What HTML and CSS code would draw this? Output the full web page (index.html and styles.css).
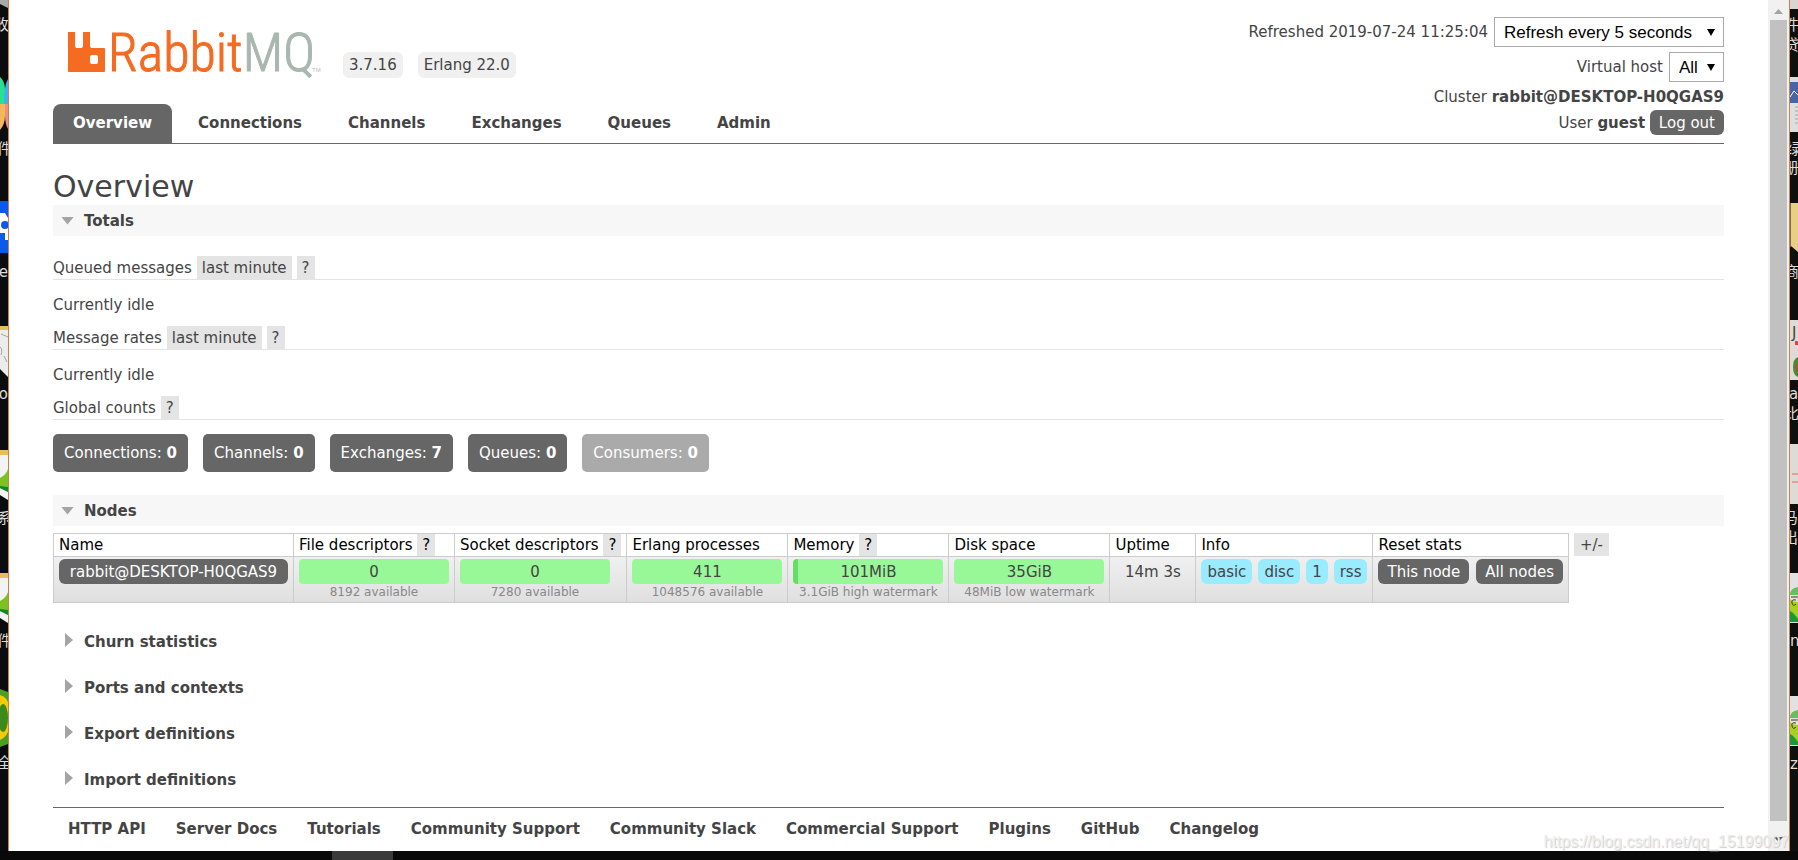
FILE: index.html
```html
<!DOCTYPE html>
<html lang="en">
<head>
<meta charset="utf-8">
<title>RabbitMQ Management</title>
<link rel="stylesheet" href="styles.css">
</head>
<body>
<div class="desktop">
  <svg class="strip" width="8" viewBox="0 0 8 851" preserveAspectRatio="xMinYMin slice" aria-hidden="true">
    <rect width="8" height="851" fill="#0b0c0d"/>
    <path d="M0 0h8v8L0 4z" fill="#a9a9a9"/>
    <path d="M0 77q5 4 5 13v14H0z" fill="#2be08c"/><path d="M8 79q-4 6-4 25h4z" fill="#3fb0ee"/>
    <path d="M0 104h5v12q0 8-5 14z" fill="#f5b75c"/><path d="M5 104h3v25q-3-5-3-14z" fill="#ee8f86"/>
    <rect y="201" width="8" height="52" fill="#0b5be8"/><path d="M0 213h5l3 5v22H5v-7H0z" fill="#fff"/><circle cx="5" cy="225" r="4" fill="#0b5be8"/>
    <path d="M0 326h8v51L0 369z" fill="#ececec"/><path d="M0 326h8v4H0z" fill="#e3c25e"/><path d="M1 334l7 3M0 347q3 2 1 8M4 356l3 6" stroke="#9aa6ad" fill="none"/>
    <path d="M0 450h8v50L0 495z" fill="#f3f3f3"/><path d="M0 450h8v5H0z" fill="#e8bd62"/><path d="M0 478q6-3 8-9v23L0 488z" fill="#7cc322"/><path d="M0 486l8 1v5l-8-4z" fill="#0c8a31"/>
    <path d="M0 573h8v50L0 618z" fill="#f3f3f3"/><path d="M0 573h8v5H0z" fill="#e8bd62"/><path d="M0 601q6-3 8-9v23L0 611z" fill="#7cc322"/><path d="M0 609l8 1v5l-8-4z" fill="#0c8a31"/>
    <path d="M0 689l8 3v52l-8 3z" fill="#4a9f25"/><path d="M0 695q6 2 8 7v30q-3 6-8 8z" fill="#f4cb07"/><ellipse cx="3" cy="718" rx="5" ry="14" fill="#3d8a1c"/>
    <g class="strip-text" text-anchor="end"><text x="9" y="30">收</text><text x="12" y="154">文件</text><text x="8" y="277">ce</text><text x="8" y="399">o</text><text x="12" y="523">联系</text><text x="12" y="646">文件</text><text x="12" y="768">安全</text></g>
  </svg>

  <div class="window">
    <div class="page">
      <header class="header">
        <div class="brand">
          <svg class="logo" width="260" height="56" viewBox="0 0 260 56" role="img" aria-label="RabbitMQ">
            <path d="M0 8.500Q0 8 .5 8H6.500Q7 8 7 8.500V22Q7 24 9 24H13Q15 24 15 22V8.500Q15 8 15.500 8H21.500Q22 8 22 8.500V22Q22 24 24 24H36Q37 24 37 25V47Q37 48 36 48H1Q0 48 0 47ZM24 31Q22 31 22 33V38Q22 40 24 40H28Q30 40 30 38V33Q30 31 28 31Z" fill="#f56b22" fill-rule="evenodd"/>
            <text class="word" x="40" y="47"><tspan class="word-rabbit">Rabbit</tspan><tspan class="word-mq">MQ</tspan></text>
            <text class="tm" x="244" y="48">TM</text>
          </svg>
          <div class="versions"><span>3.7.16</span><span>Erlang 22.0</span></div>
        </div>
        <div class="status">
          <div class="status-row"><label for="refresh">Refreshed 2019-07-24 11:25:04</label><span class="pick"><select id="refresh"><option>Refresh every 5 seconds</option></select></span></div>
          <div class="status-row"><label for="vhost">Virtual host</label><span class="pick pick-small"><select id="vhost"><option>All</option></select></span></div>
          <div class="status-line">Cluster <b>rabbit@DESKTOP-H0QGAS9</b></div>
          <div class="status-line">User <b>guest</b> <button class="btn" type="button">Log out</button></div>
        </div>
        <nav class="tabs">
          <a class="current" href="#">Overview</a><a href="#">Connections</a><a href="#">Channels</a><a href="#">Exchanges</a><a href="#">Queues</a><a href="#">Admin</a>
        </nav>
      </header>

      <main>
        <h1>Overview</h1>
        <section>
          <h2 class="bar"><i class="down"></i>Totals</h2>
          <div class="totals">
            <h3>Queued messages <button class="tag" type="button">last minute</button><button class="tag" type="button">?</button></h3>
            <p>Currently idle</p>
            <h3>Message rates <button class="tag" type="button">last minute</button><button class="tag" type="button">?</button></h3>
            <p>Currently idle</p>
            <h3>Global counts <button class="tag" type="button">?</button></h3>
            <div class="counts">
              <a href="#">Connections: <b>0</b></a><a href="#">Channels: <b>0</b></a><a href="#">Exchanges: <b>7</b></a><a href="#">Queues: <b>0</b></a><span>Consumers: <b>0</b></span>
            </div>
          </div>
        </section>
        <section>
          <h2 class="bar"><i class="down"></i>Nodes</h2>
          <div class="nodes">
            <table>
              <thead><tr>
                <th class="col-name">Name</th><th>File descriptors <button class="tag" type="button">?</button></th><th>Socket descriptors <button class="tag" type="button">?</button></th><th>Erlang processes</th><th>Memory <button class="tag" type="button">?</button></th><th>Disk space</th><th class="col-uptime">Uptime</th><th>Info</th><th>Reset stats</th>
              </tr></thead>
              <tbody><tr>
                <td><a class="btn" href="#">rabbit@DESKTOP-H0QGAS9</a></td>
                <td><div class="gauge">0</div><small>8192 available</small></td>
                <td><div class="gauge">0</div><small>7280 available</small></td>
                <td><div class="gauge">411</div><small>1048576 available</small></td>
                <td><div class="gauge used">101MiB</div><small>3.1GiB high watermark</small></td>
                <td><div class="gauge">35GiB</div><small>48MiB low watermark</small></td>
                <td class="uptime">14m 3s</td>
                <td><div class="set"><abbr>basic</abbr><abbr>disc</abbr><abbr>1</abbr><abbr>rss</abbr></div></td>
                <td><div class="set reset"><button class="btn" type="button">This node</button><button class="btn" type="button">All nodes</button></div></td>
              </tr></tbody>
            </table>
            <button class="tag" type="button">+/-</button>
          </div>
        </section>
        <div class="folded">
          <h2><i class="right"></i>Churn statistics</h2>
          <h2><i class="right"></i>Ports and contexts</h2>
          <h2><i class="right"></i>Export definitions</h2>
          <h2><i class="right"></i>Import definitions</h2>
        </div>
      </main>

      <footer class="footer">
        <a href="#">HTTP API</a><a href="#">Server Docs</a><a href="#">Tutorials</a><a href="#">Community Support</a><a href="#">Community Slack</a><a href="#">Commercial Support</a><a href="#">Plugins</a><a href="#">GitHub</a><a href="#">Changelog</a>
      </footer>
    </div>
    <div class="scroll" aria-hidden="true"><i class="up-arrow"></i><i class="thumb"></i><i class="down-arrow"></i></div>
  </div>

  <svg class="strip" width="8" viewBox="0 0 8 851" preserveAspectRatio="xMinYMin slice" aria-hidden="true">
    <rect width="8" height="851" fill="#0f0f0d"/>
    <rect width="8" height="9" fill="#d9d6d2"/>
    <rect y="77" width="8" height="55" fill="#dedede"/><rect y="82" width="8" height="21" fill="#4664a6"/><path d="M0 97l4-6 4 4" stroke="#fff" fill="none"/><path d="M5 107h3M5 111h3M5 115h3M5 119h3M5 123h3" stroke="#aaa"/>
    <path d="M0 203h8v49l-7-6z" fill="#e9cf84"/><path d="M0 203h1v44H0z" fill="#7b6e42"/>
    <rect y="320" width="8" height="60" fill="#dedbd6"/><rect x="5" y="341" width="3" height="4" fill="#e2443f"/><path d="M8 357q-5 2-5 10t5 10z" fill="#4b8b2f"/><path d="M8 363q-3 3 0 9z" fill="#d33"/>
    <rect y="444" width="8" height="60" fill="#dedbd6"/><path d="M2 474h6M2 482h6" stroke="#e06a5f"/>
    <g id="frog"><path d="M0 573h8v50H0z" fill="#e2e2e2"/><path d="M0 599q3 3 8 3v20H0z" fill="#a8cf21"/><path d="M0 611q4 2 8 8v3H0z" fill="#199a36"/><path d="M8 587q-8 1-8 8h8z" fill="#65bf5b"/><path d="M1 597h7M6 600q-5-1-4 3t4 1" stroke="#383b1b" fill="none"/></g>
    <use href="#frog" y="123"/>
    <g class="strip-text"><text x="-6" y="30">件</text><text x="-6" y="50">贷</text><text x="-4" y="154">绿</text><text x="-6" y="173">册</text><text x="-6" y="277">商城</text><text x="2" y="338" fill="#444">J</text><text x="-1" y="399">a和</text><text x="-6" y="419">比</text><text x="-7" y="523">马</text><text x="-7" y="543">出</text><text x="0" y="646">n</text><text x="0" y="769">zp</text></g>
  </svg>
  <div class="taskbar"></div>
  <div class="watermark">https://blog.csdn.net/qq_15199097</div>
</div>
</body>
</html>
```

FILE: styles.css
```css
* { box-sizing: border-box; }
body { margin: 0; background: #000; color: #444; font: 15px/20px Verdana, "DejaVu Sans", sans-serif; }
button, select { font: inherit; color: inherit; border: 0; margin: 0; }
a { color: inherit; text-decoration: none; }
h1, h2, h3, p { margin: 0; font-weight: normal; font-size: 15px; }

.desktop { position: relative; display: grid; grid-template: 1fr 9px / 8px 1fr 8px; min-height: 100vh; overflow: hidden; }
.strip { display: block; height: 100%; overflow: hidden; }
.strip-text { fill: #ddd; font: 15px "DejaVu Sans", "Noto Sans CJK SC", sans-serif; }
.window { display: flex; min-width: 0; background: #fff; border: solid #d08050; border-width: 0 1px; }
.page { flex: 1; min-width: 0; padding: 17px 44px 0; }
.taskbar { grid-column: 1 / -1; background: linear-gradient(#3a3a3a, #3a3a3a) 332px 0 / 61px 9px no-repeat #090909; }

.header { display: grid; grid-template: auto 39px / 1fr auto; border-bottom: 1px solid #666; }
.brand { display: flex; align-items: flex-start; padding: 7px 0 24px 15px; gap: 15px; }
.logo { display: block; }
.word { font: 300 54px "Liberation Sans Narrow", "Arial Narrow", "Roboto Condensed", "DejaVu Sans Condensed", sans-serif; stroke-width: 1px; }
.word-rabbit { fill: #f56b22; stroke: #f56b22; }
.word-mq { fill: #a9b7b0; stroke: #a9b7b0; }
.tm { font: 6px "Liberation Sans", sans-serif; fill: #bbb; }
.versions { display: flex; gap: 15px; padding-top: 28px; }
.versions span { padding: 3px 6px; background: #f0f0f0; border-radius: 6px; }
.tabs { grid-row: 2; display: flex; gap: 6px; }
.tabs a { padding: 9px 20px 10px; font-weight: bold; border-radius: 8px 8px 0 0; }
.tabs .current { background: #666; color: #fff; }
.status { grid-column: 2; grid-row: 1 / 3; display: flex; flex-direction: column; align-items: flex-end; text-align: right; }
.status-row { display: flex; align-items: center; gap: 6px; margin-bottom: 5px; }
.status-row + .status-line { margin-top: -3px; }
.status-line { line-height: 26px; }
.pick { position: relative; }
.pick::after { content: ""; position: absolute; right: 9px; top: 12px; width: 8px; height: 7px; background: #000; clip-path: polygon(0 0, 100% 0, 50% 100%); pointer-events: none; }
.pick select { display: block; appearance: none; width: 230px; height: 30px; padding: 0 9px; border: 1px solid #a9a9a9; background: #fff; color: #000; font: 17px "Liberation Sans", Arial, sans-serif; }
.pick-small select { width: 55px; }
.btn { display: inline-block; padding: 3px 9px 2px; line-height: 20px; border-radius: 6px; background: #666; color: #fff; white-space: nowrap; }

h1 { font-size: 30px; line-height: 36px; padding-top: 25px; }
h2 { display: flex; align-items: center; font-weight: bold; }
.bar { height: 31px; background: #f7f7f7; }
.down { width: 13px; height: 8px; margin: 0 10px 0 8px; background: #a4a4a4; clip-path: polygon(0 0, 100% 0, 50% 100%); }
.right { width: 8px; height: 14px; margin: 0 11px 4px 12px; background: #a4a4a4; clip-path: polygon(0 0, 100% 50%, 0 100%); }
.totals { padding: 20px 0 23px; }
.totals h3 { display: flex; gap: 5px; height: 24px; border-bottom: 1px solid #e4e4e4; line-height: 24px; }
.totals p { padding: 15px 0 11px; }
.tag { padding: 1px 5px 0; height: 23px; line-height: 22px; background: #e4e4e4; color: #444; }
.counts { display: flex; flex-wrap: wrap; gap: 15px; margin-top: 14px; }
.counts > * { padding: 9px 11px; border-radius: 5px; background: #666; color: #fff; }
.counts span { background: #aaa; }

.nodes { display: flex; align-items: flex-start; gap: 5px; padding: 7px 0 0; }
.nodes > .tag { padding: 1px 6px 0; }
table { border-collapse: collapse; }
th, td { border: 1px solid #ccc; padding: 0 5px; text-align: left; vertical-align: top; font-weight: normal; white-space: nowrap; }
th { color: #000; line-height: 22px; height: 23px; }
th .tag { color: #000; height: 22px; line-height: 21px; vertical-align: top; }
.col-name { min-width: 240px; }
.col-uptime { min-width: 86px; }
td { height: 46px; padding-top: 2px; color: #444; }
td > .btn { display: block; text-align: center; }
tbody tr { background: linear-gradient(#f0f0f0, #dfdfdf); }
.gauge { width: 150px; height: 25px; line-height: 26px; border-radius: 4px; background: #98f898; text-align: center; }
.gauge.used { background: linear-gradient(90deg, #66dd66 5px, #98f898 5px); }
small { display: block; width: 150px; font-size: 12px; line-height: 16px; color: #888; text-align: center; }
td.uptime { padding-top: 5px; text-align: center; }
.set { display: flex; gap: 6px; }
.reset { gap: 7px; }
abbr { padding: 3px 6px 2px; background: #99ebff; border-radius: 6px; }

.folded { padding-top: 16px; }
.folded h2 { height: 46px; }
.footer { display: flex; flex-wrap: wrap; gap: 30px; padding: 11px 15px; margin-top: 4px; border-top: 1px solid #666; font-weight: bold; }

.scroll { display: flex; flex-direction: column; align-items: center; width: 21px; background: #f1f1f1; padding: 9px 2px; }
.up-arrow { width: 9px; height: 5px; margin-bottom: 6px; background: #a3a3a3; clip-path: polygon(50% 0, 100% 100%, 0 100%); }
.thumb { flex: 1; width: 17px; background: #c1c1c1; margin-bottom: 16px; }
.down-arrow { width: 9px; height: 5px; background: #505050; clip-path: polygon(0 0, 100% 0, 50% 100%); }
.watermark { position: absolute; right: 9px; bottom: 8px; font: 16px/20px "Liberation Sans", Arial, sans-serif; color: #eee; text-shadow: 1px 1px 1px #ccc; pointer-events: none; }
```
